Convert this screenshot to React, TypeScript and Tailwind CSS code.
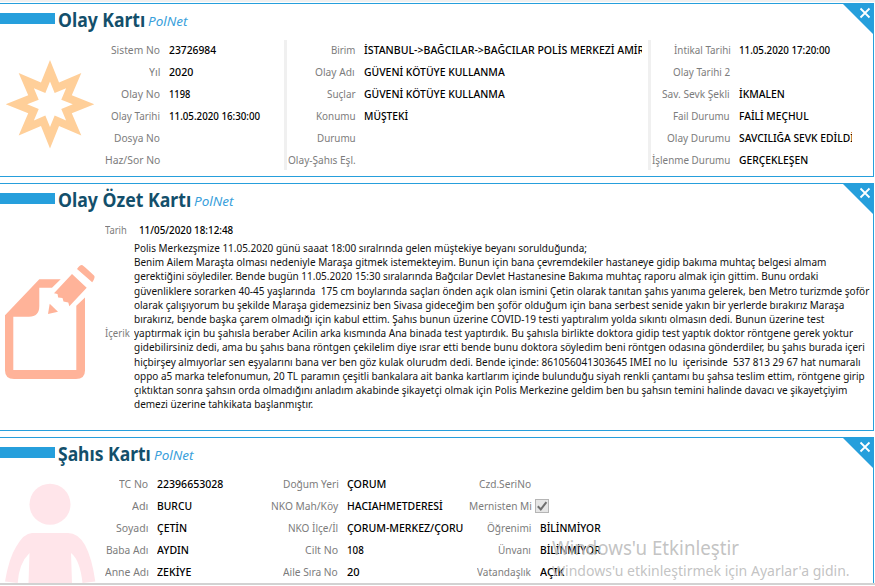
import { useLayoutEffect, useRef, useState } from "react";
import type { ReactNode } from "react";

// Text condensed horizontally so that it fills a given width.
function Fit({ w, children, className = "" }: { w: number; children: string; className?: string }) {
  const ref = useRef<HTMLSpanElement>(null);
  const [scale, setScale] = useState(1);
  useLayoutEffect(() => {
    if (ref.current) setScale(w / ref.current.offsetWidth);
  }, [w]);
  return (
    <span className={"block shrink-0 " + className} style={{ width: w }}>
      <span ref={ref} className="inline-block origin-left whitespace-pre align-top" style={{ transform: `scaleX(${scale})` }}>
        {children}
      </span>
    </span>
  );
}

type Row = [string, number, string?, number?];

function Fields({ rows, labels, values, check }: { rows: Row[]; labels: string; values: string; check?: number }) {
  return (
    <div className="flex flex-col">
      {rows.map(([label, lw, value, vw], i) => (
        <div key={i} className="flex h-[22px] items-center">
          <div className={"flex shrink-0 justify-end text-[#7c7c7c] " + labels}>
            <Fit w={lw}>{label}</Fit>
          </div>
          {check === i ? (
            <div className="ml-1 flex size-[14px] items-center justify-center border border-[#b5b5b5] bg-[#e6e6e6]">
              <svg viewBox="0 0 12 12" className="size-3" fill="none" stroke="#6f6f6f" strokeWidth="2">
                <path d="M1.8 6.2 4.8 9.4 10.4 2.2" />
              </svg>
            </div>
          ) : (
            <div className={"ml-[9px] overflow-hidden font-medium text-black " + values}>
              {value && <Fit w={vw ?? 0}>{value}</Fit>}
            </div>
          )}
        </div>
      ))}
    </div>
  );
}

function Card({ title, tw, height, children }: { title: string; tw: number; height: string; children: ReactNode }) {
  return (
    <section className={"relative w-[874px] shrink-0 border-y border-r border-[#269fdc] bg-white " + height}>
      <header className="flex h-[35px] items-start">
        <div className="mt-[9px] h-[11px] w-[55px] bg-[#269fdc]" />
        <h2 className="ml-[3px] mt-px text-[19px] font-bold leading-[30px] text-[#134f6b]">
          <Fit w={tw}>{title}</Fit>
        </h2>
        <span className="ml-[2.5px] mt-[2px] text-[13px] italic leading-[30px] text-[#3a9fdb]">
          <Fit w={39.5}>PolNet</Fit>
        </span>
      </header>
      <svg viewBox="0 0 30 30" className="absolute right-0 top-0 size-[30px]">
        <path d="M0 0H30V30Z" fill="#269fdc" />
        <path d="M17.5 4.5 26.5 13.5M26.5 4.5 17.5 13.5" stroke="#fff" strokeWidth="1.8" />
      </svg>
      {children}
    </section>
  );
}

const story: [string, number][] = [
  ["Polis Merkezşmize 11.05.2020 günü saaat 18:00 sıralrında gelen müştekiye beyanı sorulduğunda;", 453],
  ["Benim Ailem Maraşta olması nedeniyle Maraşa gitmek istemekteyim. Bunun için bana çevremdekiler hastaneye gidip bakıma muhtaç belgesi almam", 692],
  ["gerektiğini söylediler. Bende bugün 11.05.2020 15:30 sıralarında Bağcılar Devlet Hastanesine Bakıma muhtaç raporu almak için gittim. Bunu ordaki", 684],
  ["güvenliklere sorarken 40-45 yaşlarında  175 cm boylarında saçları önden açık olan ismini Çetin olarak tanıtan şahıs yanıma gelerek, ben Metro turizmde şoför", 735],
  ["olarak çalışıyorum bu şekilde Maraşa gidemezsiniz ben Sivasa gideceğim ben şoför olduğum için bana serbest senide yakın bir yerlerde bırakırız Maraşa", 710],
  ["bırakırız, bende başka çarem olmadığı için kabul ettim. Şahıs bunun üzerine COVID-19 testi yaptıralım yolda sıkıntı olmasın dedi. Bunun üzerine test", 690],
  ["yaptırmak için bu şahısla beraber Acilin arka kısmında Ana binada test yaptırdık. Bu şahısla birlikte doktora gidip test yaptık doktor röntgene gerek yoktur", 719],
  ["gidebilirsiniz dedi, ama bu şahıs bana röntgen çekilelim diye ısrar etti bende bunu doktora söyledim beni röntgen odasına gönderdiler, bu şahıs burada içeri", 731],
  ["hiçbirşey almıyorlar sen eşyalarını bana ver ben göz kulak olurudm dedi. Bende içinde: 861056041303645 IMEI no lu  içerisinde  537 813 29 67 hat numaralı", 727],
  ["oppo a5 marka telefonumun, 20 TL paramın çeşitli bankalara ait banka kartlarım içinde bulunduğu siyah renkli çantamı bu şahsa teslim ettim, röntgene girip", 731],
  ["çıktıktan sonra şahsın orda olmadığını anladım akabinde şikayetçi olmak için Polis Merkezine geldim ben bu şahsın temini halinde davacı ve şikayetçiyim", 713],
  ["demezi üzerine tahkikata başlanmıştır.", 179],
];

function star(cx: number, cy: number, outer: number, inner: number) {
  return (
    Array.from({ length: 16 }, (_, i) => {
      const r = i % 2 ? inner : outer;
      const a = (i * Math.PI) / 8;
      return `${i ? "L" : "M"}${(cx + r * Math.sin(a)).toFixed(2)} ${(cy - r * Math.cos(a)).toFixed(2)}`;
    }).join("") + "Z"
  );
}

export default function App() {
  return (
    <main className="relative h-[586px] w-[875px] overflow-hidden bg-white font-['Noto_Sans','Open_Sans',sans-serif] text-[11.5px] leading-[22px]">
      <div className="flex h-[583px] flex-col gap-[6px] overflow-hidden">
        <div className="-mb-[5px] h-[2px] shrink-0 bg-[#f0f0f0]" />
        <Card title="Olay Kartı" tw={87} height="h-[174px]">
          <div className="flex">
            <svg viewBox="0 0 100 100" className="mt-4 size-[100px] shrink-0">
              <path fillRule="evenodd" fill="#ffcf99" d={star(50, 49.3, 44.3, 23.6) + star(50, 49.3, 22.8, 12.2)} />
            </svg>
            <Fields labels="w-[60px]" values="w-[110px]" rows={[
              ["Sistem No", 49, "23726984", 47.5], ["Yıl", 11, "2020", 24], ["Olay No", 39, "1198", 21],
              ["Olay Tarihi", 49, "11.05.2020 16:30:00", 91.5], ["Dosya No", 46], ["Haz/Sor No", 55],
            ]} />
            <div className="ml-[5px] mt-px h-[130px] w-[3px] bg-[#f0f0f0]" />
            <Fields labels="w-[68px]" values="w-[278px]" rows={[
              ["Birim", 24.5, "İSTANBUL->BAĞCILAR->BAĞCILAR POLİS MERKEZİ AMİR", 280.5],
              ["Olay Adı", 40, "GÜVENİ KÖTÜYE KULLANMA", 141], ["Suçlar", 28.5, "GÜVENİ KÖTÜYE KULLANMA", 141],
              ["Konumu", 39.5, "MÜŞTEKİ", 44.5], ["Durumu", 38.5], ["Olay-Şahıs Eşl.", 67.5],
            ]} />
            <div className="ml-[6px] mt-px h-[130px] w-[3px] bg-[#f0f0f0]" />
            <Fields labels="w-[79px]" values="w-[113px]" rows={[
              ["İntikal Tarihi", 56.5, "11.05.2020 17:20:00", 91.5], ["Olay Tarihi 2", 57.5], ["Sav. Sevk Şekli", 68, "İKMALEN", 46],
              ["Fail Durumu", 57, "FAİLİ MEÇHUL", 69.5], ["Olay Durumu", 63, "SAVCILIĞA SEVK EDİLDİ", 114.5], ["İşlenme Durumu", 78, "GERÇEKLEŞEN", 69],
            ]} />
          </div>
        </Card>
        <Card title="Olay Özet Kartı" tw={133} height="h-[248px]">
          <div className="flex">
            <svg viewBox="0 255 105 130" className="mt-[36px] h-[130px] w-[105px] shrink-0" fill="#ffb399">
              <path fillRule="evenodd" d="M39.300 279.300H60.700L52 287.700H39.300V306Q39.300 316.700 29 316.700H13.300V370H76.300V305.700L85 297.500V370.500Q85 379 76 379H14Q5 379 5 370.500V315.300Z" />
              <path d="M72 274 86.700 287.700 69.300 306.300 68.300 302.500 63.500 301.500 62.500 298 58.200 297.500 57.500 294 54 293.300Z" />
              <path d="M49.700 303.700 58 311.700 48 314Z" />
              <path d="M77 269Q80 264.500 82.500 265.200 84 266 94 275.500 95.800 277 92.200 282.300Z" />
            </svg>
            <div>
              <div className="flex h-[22px] items-center">
                <Fit w={22} className="text-[#7c7c7c]">Tarih</Fit>
                <Fit w={94} className="ml-3 font-medium text-black">11/05/2020 18:12:48</Fit>
              </div>
              <div className="flex items-center">
                <div className="w-[29px] pt-[14px] text-[#7c7c7c]"><Fit w={25}>İçerik</Fit></div>
                <div className="flex flex-col text-[#111]">
                  {story.map(([line, w], i) => (
                    <div key={i} className="flex h-[14.2px] items-center"><Fit w={w}>{line}</Fit></div>
                  ))}
                </div>
              </div>
            </div>
          </div>
        </Card>
        <Card title="Şahıs Kartı" tw={93} height="h-[220px]">
          <div className="flex">
            <svg viewBox="0 475 100 111" className="mt-[2px] h-[111px] w-[100px] shrink-0" fill="#ffe5ea">
              <circle cx="50" cy="504.300" r="20.500" />
              <path d="M5 581.500Q9 558 16 547 24 533 32 533H68Q78 533 85 545 92 558 95.300 581.500L82.500 583Q80 560 71 553L72 583H28.500L29.500 553Q19 563 17.700 583Z" />
            </svg>
            <Fields labels="w-12" values="w-[100px]" rows={[
              ["TC No", 29, "22396653028", 66], ["Adı", 16, "BURCU", 35], ["Soyadı", 32, "ÇETİN", 30],
              ["Baba Adı", 42.5, "AYDIN", 32], ["Anne Adı", 43.5, "ZEKİYE", 34],
            ]} />
            <Fields labels="w-[81px]" values="w-[117px]" rows={[
              ["Doğum Yeri", 55.5, "ÇORUM", 39], ["NKO Mah/Köy", 67.5, "HACIAHMETDERESİ", 96], ["NKO İlçe/İl", 50.5, "ÇORUM-MERKEZ/ÇORU", 116.5],
              ["Cilt No", 33, "108", 17], ["Aile Sıra No", 55, "20", 12.5],
            ]} />
            <Fields labels="w-[67px]" values="w-[117px]" check={1} rows={[
              ["Czd.SeriNo", 52], ["Mernisten Mi", 62.5], ["Öğrenimi", 44.5, "BİLİNMİYOR", 60.5],
              ["Ünvanı", 33, "BİLİNMİYOR", 60.5], ["Vatandaşlık", 54, "AÇIK", 24.5],
            ]} />
          </div>
        </Card>
      </div>
      <div className="h-[2px] bg-[#d2d2d2]" />
      <div className="absolute left-[552px] top-[537px] flex flex-col text-[#bcbcbc]/90">
        <Fit w={187} className="text-[19px] leading-[22px]">Windows'u Etkinleştir</Fit>
        <Fit w={298} className="text-[14.5px] leading-[22px]">Windows'u etkinleştirmek için Ayarlar'a gidin.</Fit>
      </div>
    </main>
  );
}
